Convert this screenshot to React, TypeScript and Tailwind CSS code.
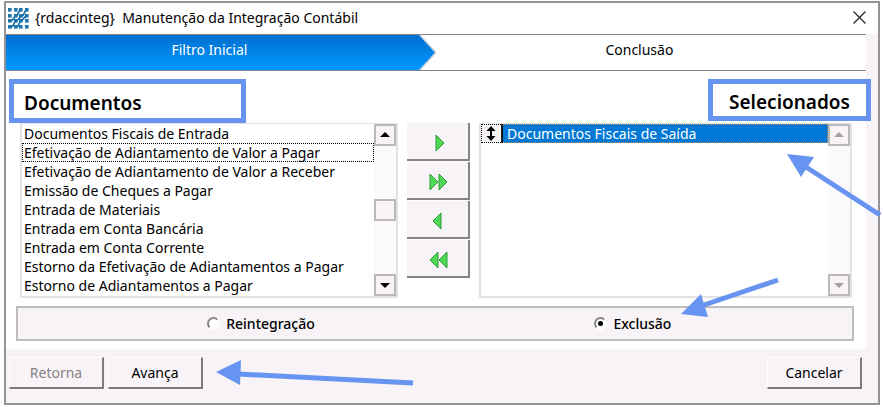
import { useState } from 'react';

const documentos = [
  'Documentos Fiscais de Entrada',
  'Efetivação de Adiantamento de Valor a Pagar',
  'Efetivação de Adiantamento de Valor a Receber',
  'Emissão de Cheques a Pagar',
  'Entrada de Materiais',
  'Entrada em Conta Bancária',
  'Entrada em Conta Corrente',
  'Estorno da Efetivação de Adiantamentos a Pagar',
  'Estorno de Adiantamentos a Pagar',
];

const moveButtons = [
  { label: 'Adicionar', shapes: ['M29 12v16l8-8z'] },
  { label: 'Adicionar todos', shapes: ['M23 12v16l8-8z', 'M32 12v16l8-8z'] },
  { label: 'Remover', shapes: ['M34 12v16l-8-8z'] },
  { label: 'Remover todos', shapes: ['M31 12v16l-8-8z', 'M40 12v16l-8-8z'] },
];

const logoDots = [0, 6, 11, 17];

function Logo() {
  return (
    <svg width="21" height="21" viewBox="0 0 21 21" className="shrink-0">
      {logoDots.map((y) =>
        logoDots.map((x) => <rect key={`${x}-${y}`} x={x} y={y} width="3.6" height="3.6" fill="#1f74ad" />)
      )}
      <path
        d="M2 13c4 0 3-4 6-5s2-6 5-6M2 19c5 0 3-5 6-6s3-4 6-5 2-6 5-6M8 19c4 0 2-5 5-6s3-5 6-5"
        stroke="#1f74ad"
        strokeWidth="1.8"
        fill="none"
      />
    </svg>
  );
}

function ScrollBar({ disabled = false, thumb = false }: { disabled?: boolean; thumb?: boolean }) {
  const box = 'flex h-[22px] w-full items-center justify-center border-2 border-[#bab8ba] bg-[#f7f3f7]';
  const color = disabled ? '#a3a1a3' : '#000';
  return (
    <div className="flex w-[22px] shrink-0 flex-col justify-between bg-[#fbf9fb]">
      <button className={box} disabled={disabled} aria-label="Rolar para cima">
        <svg width="10" height="6" viewBox="0 0 10 6"><path d="M5 0l5 5H0z" fill={color} /></svg>
      </button>
      {thumb && <div className={box} />}
      <button className={box} disabled={disabled} aria-label="Rolar para baixo">
        <svg width="10" height="6" viewBox="0 0 10 6"><path d="M5 6l5-5H0z" fill={color} /></svg>
      </button>
    </div>
  );
}

function PushButton({ children, disabled = false }: { children: string; disabled?: boolean }) {
  return (
    <button
      disabled={disabled}
      className="h-8 w-[95px] border-t border-l border-r-2 border-b-2 border-t-white border-l-white border-r-[#7d7b7d] border-b-[#7d7b7d] bg-[#f7f3f7] text-sm text-black disabled:text-[#858385]"
    >
      {children}
    </button>
  );
}

function Radio({ label, checked, onChange }: { label: string; checked: boolean; onChange: () => void }) {
  return (
    <label className="flex items-center gap-1.5 text-sm font-medium">
      <input
        type="radio"
        name="operacao"
        checked={checked}
        onChange={onChange}
        className="flex size-[13px] appearance-none items-center justify-center rounded-full border-2 border-t-[#858385] border-r-white border-b-white border-l-[#858385] bg-white checked:before:size-[5px] checked:before:rounded-full checked:before:bg-black"
      />
      {label}
    </label>
  );
}

export default function App() {
  const [operacao, setOperacao] = useState('Exclusão');

  return (
    <div className="bg-white pt-px pr-[3px] pb-[5px] pl-1 font-['Noto_Sans','Open_Sans',sans-serif] text-black">
      <div className="relative border-2 border-[#959395] bg-[#f7f3f7]">
        <header className="flex h-[31px] items-center gap-1.5 bg-white pr-3 pl-0.5">
          <Logo />
          <h1 className="flex-1 pb-0.5 text-sm whitespace-pre">{'{rdaccinteg}  Manutenção da Integração Contábil'}</h1>
          <button aria-label="Fechar" className="pb-0.5">
            <svg width="13" height="13" viewBox="0 0 13 13"><path d="M0.5 0.5l12 12M12.5 0.5l-12 12" stroke="#222" strokeWidth="1.2" /></svg>
          </button>
        </header>

        <main className="mr-3 bg-white pb-2">
          <ol className="flex h-[37px] border-y border-t-[#858385] border-b-[#858385] text-sm">
            <li className="flex w-[48%] justify-center bg-linear-to-b from-[#006fd0] to-[#0098ff] pt-[5px] pr-1.5 text-white">
              Filtro Inicial
            </li>
            <li className="relative flex flex-1 justify-center pt-[5px] pr-1.5">
              <svg className="absolute top-0 left-0" width="19" height="35" viewBox="0 0 19 35">
                <defs>
                  <linearGradient id="step" x1="0" y1="0" x2="0" y2="1">
                    <stop offset="0" stopColor="#006fd0" />
                    <stop offset="1" stopColor="#0098ff" />
                  </linearGradient>
                </defs>
                <path d="M0 0l16 17.5L0 35z" fill="url(#step)" />
                <path d="M1 0l16 17.5L1 35" fill="none" stroke="#b5b5b5" />
              </svg>
              Conclusão
            </li>
          </ol>

          <div className="flex justify-between pt-2 pl-[3px]">
            <h2 className="flex h-11 w-[237px] items-center border-[5px] border-[#6694f0] pt-1 pl-2.5 text-[19px] leading-6 font-semibold">
              Documentos
            </h2>
            <h2 className="-mr-[5px] flex h-[42px] w-[163px] items-center justify-center border-[5px] border-[#6694f0] pt-1 text-[19px] leading-6 font-semibold">
              Selecionados
            </h2>
          </div>

          <div className="grid grid-cols-[377fr_63px_372fr] gap-x-[9px] pr-3.5 pl-3.5">
            <div className="flex border-2 border-t border-[#e3e2e3]">
              <ul role="listbox" aria-label="Documentos" className="min-w-0 flex-1 pb-px text-sm leading-[19px]">
                {documentos.map((doc, i) => (
                  <li
                    key={doc}
                    role="option"
                    aria-selected={false}
                    className={i === 1 ? 'truncate px-0.5 outline-1 -outline-offset-1 outline-dotted outline-black' : 'truncate px-0.5'}
                  >
                    {doc}
                  </li>
                ))}
              </ul>
              <ScrollBar thumb />
            </div>

            <div className="flex flex-col gap-px">
              {moveButtons.map((btn) => (
                <button
                  key={btn.label}
                  aria-label={btn.label}
                  className="h-[38px] border-r-2 border-b-2 border-[#858385] bg-[#f7f3f7]"
                >
                  <svg className="mx-auto" width="61" height="36" viewBox="0 0 61 36">
                    {btn.shapes.map((d) => (
                      <path key={d} d={d} fill="#4fd853" stroke="#2f9a3a" />
                    ))}
                  </svg>
                </button>
              ))}
            </div>

            <div className="flex border-2 border-t border-[#e3e2e3]">
              <ul role="listbox" aria-label="Selecionados" className="min-w-0 flex-1 pb-px text-sm leading-[19px]">
                <li role="option" aria-selected className="flex bg-[#0078d7] text-white outline-1 -outline-offset-1 outline-dotted outline-[#d98a4b]">
                  <span className="relative flex w-[22px] items-center justify-center border-r-2 border-[#222] bg-[#f7f3f7] outline-1 -outline-offset-1 outline-dotted outline-black">
                    <svg width="10" height="15" viewBox="0 0 10 15">
                      <path d="M5 0l4.5 5H6v5h3.5L5 15 .5 10H4V5H.5z" fill="#000" />
                    </svg>
                  </span>
                  <span className="truncate pl-1">Documentos Fiscais de Saída</span>
                </li>
              </ul>
              <ScrollBar disabled />
            </div>
          </div>

          <fieldset className="mt-2 mr-3 ml-2.5 flex h-[35px] justify-between border-2 border-[#bebcbe] bg-[#f7f3f7] pr-[21%] pl-[22%]">
            <Radio label="Reintegração" checked={operacao === 'Reintegração'} onChange={() => setOperacao('Reintegração')} />
            <Radio label="Exclusão" checked={operacao === 'Exclusão'} onChange={() => setOperacao('Exclusão')} />
          </fieldset>
        </main>

        <footer className="flex h-[54px] gap-1 pt-2 pr-4 pl-[3px]">
          <PushButton disabled>Retorna</PushButton>
          <PushButton>Avança</PushButton>
          <div className="ml-auto">
            <PushButton>Cancelar</PushButton>
          </div>
        </footer>

        {/* callout arrows */}
        <svg className="absolute top-[150px] -right-1 z-10" width="98" height="66" viewBox="0 0 98 66">
          <path d="M96 62L22 14" stroke="#6694f0" strokeWidth="5" />
          <path d="M3 1l27 3-13 20z" fill="#6694f0" />
        </svg>
        <svg className="absolute right-[98px] bottom-[82px] z-10" width="101" height="46" viewBox="0 0 101 46">
          <path d="M99 5L22 31" stroke="#6694f0" strokeWidth="5" />
          <path d="M2 39l20-20 7 23z" fill="#6694f0" />
        </svg>
        <svg className="absolute bottom-[14px] left-[208px] z-10" width="202" height="32" viewBox="0 0 202 32">
          <path d="M199 26L24 17" stroke="#6694f0" strokeWidth="5" />
          <path d="M2 15L27 3l-1 25z" fill="#6694f0" />
        </svg>
      </div>
    </div>
  );
}
